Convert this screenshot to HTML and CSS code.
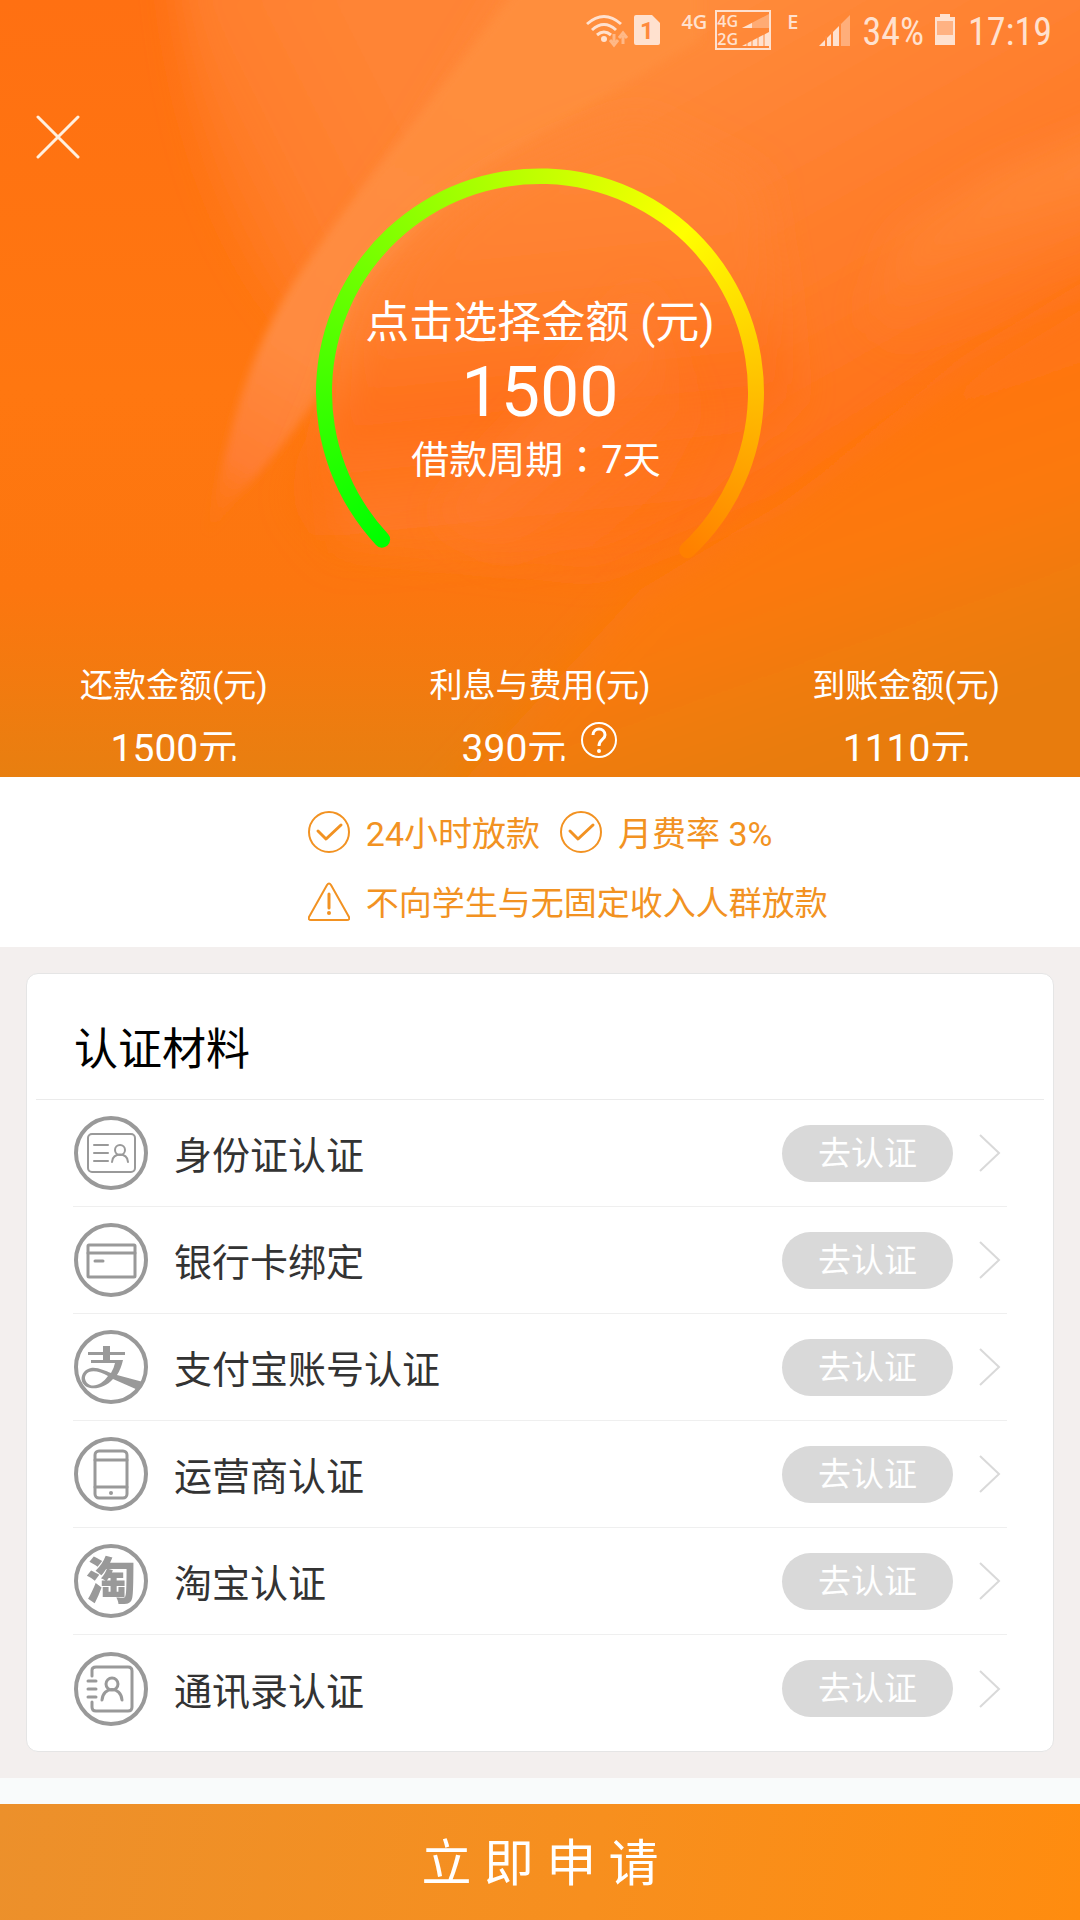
FILE: index.html
```html
<!DOCTYPE html>
<html lang="zh-CN">
<head>
<meta charset="utf-8">
<meta name="viewport" content="width=device-width, initial-scale=1">
<title>借款申请</title>
<link rel="stylesheet" href="styles.css">
</head>
<body>
<div class="page">
  <header class="hero">
    <svg class="hero-bg" viewBox="0 0 1080 777" preserveAspectRatio="none" aria-hidden="true">
      <defs>
        <linearGradient id="base" x1="0" y1="0" x2="0" y2="1">
          <stop offset="0" stop-color="#ff7012"/><stop offset=".5" stop-color="#ff7710"/><stop offset=".76" stop-color="#fc760f"/><stop offset="1" stop-color="#e87f10"/>
        </linearGradient>
        <linearGradient id="sheet" gradientUnits="userSpaceOnUse" x1="540" y1="40" x2="800" y2="500">
          <stop offset="0" stop-color="#ff8e3e"/><stop offset=".35" stop-color="#ff8333"/><stop offset=".7" stop-color="#ff7a27"/><stop offset="1" stop-color="#ff7014"/>
        </linearGradient>
        <linearGradient id="left" gradientUnits="userSpaceOnUse" x1="160" y1="230" x2="400" y2="110">
          <stop offset="0" stop-color="#ff7820" stop-opacity="0"/><stop offset=".5" stop-color="#ff7e2c"/><stop offset="1" stop-color="#ff8434"/>
        </linearGradient>
        <linearGradient id="band" gradientUnits="userSpaceOnUse" x1="480" y1="90" x2="215" y2="540">
          <stop offset="0" stop-color="#ff8e3e"/><stop offset=".6" stop-color="#ff8b40"/><stop offset=".85" stop-color="#ff7d30"/><stop offset="1" stop-color="#ff7616" stop-opacity="0"/>
        </linearGradient>
        <linearGradient id="inner" gradientUnits="userSpaceOnUse" x1="480" y1="170" x2="520" y2="560">
          <stop offset="0" stop-color="#ff8636"/><stop offset=".35" stop-color="#ff7e2c"/><stop offset=".6" stop-color="#ff701a"/><stop offset="1" stop-color="#ff7212" stop-opacity="0"/>
        </linearGradient>
        <linearGradient id="fold" gradientUnits="userSpaceOnUse" x1="510" y1="400" x2="640" y2="560">
          <stop offset="0" stop-color="#ff8038" stop-opacity=".8"/><stop offset="1" stop-color="#ff7015" stop-opacity="0"/>
        </linearGradient>
        <linearGradient id="wing" gradientUnits="userSpaceOnUse" x1="990" y1="170" x2="1040" y2="330">
          <stop offset="0" stop-color="#ff8b3c"/><stop offset="1" stop-color="#ff7a24" stop-opacity="0"/>
        </linearGradient>
        <linearGradient id="corner" gradientUnits="userSpaceOnUse" x1="860" y1="420" x2="960" y2="700">
          <stop offset="0" stop-color="#ff7512"/><stop offset=".4" stop-color="#fc790f"/><stop offset="1" stop-color="#e87c10"/>
        </linearGradient>
        <filter id="soft" x="-20%" y="-20%" width="140%" height="140%"><feGaussianBlur stdDeviation="18"/></filter>
        <filter id="edge" x="-10%" y="-10%" width="120%" height="120%"><feGaussianBlur stdDeviation="4"/></filter>
      </defs>
      <rect width="1080" height="777" fill="url(#base)"/>
      <path d="M175-40C185 130 220 250 300 330L560 200 540-40Z" fill="url(#left)" filter="url(#soft)"/>
      <path d="M540-50L1140-50V270L967 366 781 504 600 570 340 540 320 300 420 150Z" fill="url(#sheet)" filter="url(#soft)"/>
      <path d="M525-20Q470 50 413 124Q350 200 296 279Q250 350 227 448L200 550 234 500Q290 440 317 398L360 290 480 170 700 40V-20Z" fill="url(#band)" filter="url(#edge)"/>
      <path d="M640 120C480 170 400 240 360 330L336 400 290 500 330 570H640L800 400 760 180Z" fill="url(#inner)" filter="url(#soft)"/>
      <path d="M640 290L580 365 435 515 500 560 640 540 700 420Z" fill="url(#fold)" filter="url(#soft)"/>
      <path d="M1140 120L1000 175 900 235 860 320 920 380 1140 340Z" fill="url(#wing)" filter="url(#soft)"/>
      <path d="M1140 260L967 366 781 504 640 590 400 850H1140Z" fill="url(#corner)" filter="url(#soft)"/>
    </svg>

    <div class="status">
      <svg width="44" height="36" viewBox="0 0 44 36" fill="none" stroke="currentColor" stroke-width="3" aria-hidden="true">
        <path d="M2 12Q19-3 36 12M7 18Q19 7 31 18M12 23Q19 17 26 23"/><circle cx="19" cy="27" r="3" fill="currentColor" stroke="none"/>
        <path d="M29 22V30M25 28L29 33 33 28M38 32V24M34 26L38 21 42 26" opacity=".5"/>
      </svg>
      <svg class="sim" width="28" height="32" viewBox="0 0 28 32" aria-hidden="true">
        <path d="M2 1H19L27 9V29Q27 31 25 31H3Q1 31 1 29V3Q1 1 3 1Z" fill="currentColor"/>
        <text x="7" y="25" class="sim-text">1</text>
      </svg>
      <span class="net">4G</span>
      <span class="dual">
        <span class="dual-row">4G<svg width="28" height="16" viewBox="0 0 28 16" aria-hidden="true"><path d="M1 15L28 1V15Z" fill="currentColor" opacity=".4"/><path d="M1 15L11 10V15Z" fill="currentColor"/></svg></span>
        <span class="dual-row">2G<svg width="28" height="16" viewBox="0 0 28 16" aria-hidden="true"><path d="M1 15L28 1V15Z" fill="currentColor"/><path d="M6 11V15M11 8V15M17 5V15M23 2V15" stroke="#ff8a3d"/></svg></span>
      </span>
      <span class="net edge">E</span>
      <svg class="signal" width="32" height="32" viewBox="0 0 32 32" aria-hidden="true">
        <path d="M22 10L31 1V32H22Z" fill="currentColor" opacity=".45"/><path d="M0 32L20 12V32Z" fill="currentColor"/>
        <path d="M7 22V32M13 16V32M21 9V32" stroke="#ff8a3d" stroke-width="2"/>
      </svg>
      <span class="status-text">34%</span>
      <svg class="battery" width="22" height="32" viewBox="0 0 22 32" aria-hidden="true">
        <path d="M6 3V0H16V3H21V31H1V3Z" fill="currentColor"/><path d="M3 7H19V21H3Z" fill="#ffb283"/>
      </svg>
      <span class="status-text">17:19</span>
    </div>

    <nav class="nav">
      <button class="close" type="button" aria-label="关闭">
        <svg width="44" height="44" viewBox="0 0 44 44" fill="none" stroke="currentColor" stroke-width="3" stroke-linecap="round"><path d="M2 2L42 42M42 2L2 42"/></svg>
      </button>
    </nav>

    <button class="dial" type="button">
      <svg class="clip" width="0" height="0" aria-hidden="true"><clipPath id="arc"><path d="M60 377A224 224 0 1 1 377 388A8 8 0 0 1 366 376A208 208 0 1 0 72 366A8 8 0 0 1 60 377Z"/></clipPath></svg>
      <span class="ring"></span>
      <span class="dial-label">点击选择金额 (元)</span>
      <span class="dial-amount">1500</span>
      <span class="dial-term">借款周期<span class="colon" lang="zh-TW">：</span>7天</span>
    </button>

    <dl class="stats">
      <div class="stat"><dt>还款金额(元)</dt><dd><span class="value">1500元</span></dd></div>
      <div class="stat"><dt>利息与费用(元)</dt><dd><span class="value">390元</span>
        <button class="help" type="button" aria-label="费用说明"><svg width="38" height="38" viewBox="0 0 38 38" fill="none" stroke="currentColor" stroke-width="2"><circle cx="19" cy="19" r="17"/><path d="M13 14C13 6 25 6 25 14C25 19 19 18 19 25" stroke-width="3"/><circle cx="19" cy="30" r="2" fill="currentColor" stroke="none"/></svg></button></dd></div>
      <div class="stat"><dt>到账金额(元)</dt><dd><span class="value">1110元</span></dd></div>
    </dl>
  </header>

  <section class="notice">
    <div class="notice-row notice-main">
      <span class="tip"><svg width="42" height="42" viewBox="0 0 42 42"><circle cx="21" cy="21" r="20"/><path d="M10 20L18 28 33 14" stroke-width="3"/></svg><span>24小时放款</span></span>
      <span class="tip"><svg width="42" height="42" viewBox="0 0 42 42"><circle cx="21" cy="21" r="20"/><path d="M10 20L18 28 33 14" stroke-width="3"/></svg><span>月费率 3%</span></span>
    </div>
    <div class="notice-row">
      <span class="tip"><svg width="42" height="42" viewBox="0 0 42 42"><path d="M19 4Q21 1 23 4L41 36Q42 39 39 39H3Q0 39 1 36Z"/><path d="M21 13V27" stroke-width="3"/><circle cx="21" cy="32" r="2" class="dot"/></svg><span>不向学生与无固定收入人群放款</span></span>
    </div>
  </section>

  <main class="content">
    <section class="card">
      <h1 class="card-title">认证材料</h1>
      <ul class="list">
        <li class="item">
          <svg class="icon" viewBox="0 0 74 74"><circle class="rim" cx="37" cy="37" r="35"/><rect x="14" y="18" width="47" height="38" rx="4"/><path d="M20 29H34M20 37H34M20 45H34"/><circle cx="46" cy="34" r="5"/><path d="M38 46C38 36 54 36 54 46"/></svg>
          <span class="name">身份证认证</span><button class="pill" type="button">去认证</button>
          <svg class="chevron" viewBox="0 0 22 38"><path d="M1 1L20 19 1 37"/></svg>
        </li>
        <li class="item">
          <svg class="icon" viewBox="0 0 74 74"><circle class="rim" cx="37" cy="37" r="35"/><rect x="14" y="22" width="47" height="32" rx="1" class="heavy"/><path class="heavy" d="M14 30H61M21 38H29"/></svg>
          <span class="name">银行卡绑定</span><button class="pill" type="button">去认证</button>
          <svg class="chevron" viewBox="0 0 22 38"><path d="M1 1L20 19 1 37"/></svg>
        </li>
        <li class="item">
          <svg class="icon" viewBox="0 0 74 74"><circle class="rim" cx="37" cy="37" r="35"/><path class="solid" d="M29 16H36V22H51V25H36V30H49Q47 39 43 45L69 52 64 60 39 49C31 58 20 60 13 57C4 52 7 40 17 38C24 37 31 41 37 43Q40 38 41 33H17V30H29V25H14V22H29ZM34 46C27 42 20 40 15 42C9 45 10 52 16 55C22 57 29 53 34 46Z"/></svg>
          <span class="name">支付宝账号认证</span><button class="pill" type="button">去认证</button>
          <svg class="chevron" viewBox="0 0 22 38"><path d="M1 1L20 19 1 37"/></svg>
        </li>
        <li class="item">
          <svg class="icon" viewBox="0 0 74 74"><circle class="rim" cx="37" cy="37" r="35"/><rect class="book" x="21" y="14" width="32" height="47" rx="4"/><path class="book" d="M21 23H53M21 50H53"/><circle class="solid" cx="37" cy="56" r="2"/></svg>
          <span class="name">运营商认证</span><button class="pill" type="button">去认证</button>
          <svg class="chevron" viewBox="0 0 22 38"><path d="M1 1L20 19 1 37"/></svg>
        </li>
        <li class="item">
          <svg class="icon" viewBox="0 0 74 74"><circle class="rim" cx="37" cy="37" r="35"/><text class="tao" x="37" y="55" text-anchor="middle">淘</text></svg>
          <span class="name">淘宝认证</span><button class="pill" type="button">去认证</button>
          <svg class="chevron" viewBox="0 0 22 38"><path d="M1 1L20 19 1 37"/></svg>
        </li>
        <li class="item">
          <svg class="icon" viewBox="0 0 74 74"><circle class="rim" cx="37" cy="37" r="35"/><path class="book" d="M18 24V18Q18 15 22 15H54Q58 15 58 19V55Q58 59 54 59H22Q18 59 18 55V50M14 29H22M14 37H22M14 45H22"/><circle class="book" cx="38" cy="32" r="6"/><path class="book" d="M28 48C29 34 47 34 48 48"/></svg>
          <span class="name">通讯录认证</span><button class="pill" type="button">去认证</button>
          <svg class="chevron" viewBox="0 0 22 38"><path d="M1 1L20 19 1 37"/></svg>
        </li>
      </ul>
    </section>
  </main>

  <footer class="footer"><button class="apply" type="button">立 即 申 请</button></footer>
</div>
</body>
</html>
```
FILE: styles.css
```css
* { box-sizing: border-box; }

body {
  margin: 0;
  background: #f9fbfb;
  color: #333;
  font-family: Roboto, "Noto Sans CJK SC", sans-serif;
}

button {
  padding: 0;
  border: 0;
  background: none;
  color: inherit;
  font: inherit;
}

svg { display: block; flex: none; }

.page { min-height: 100vh; display: flex; flex-direction: column; }

/* Orange header */
.hero { position: relative; color: #fff; padding-bottom: 16px; isolation: isolate; }
.hero-bg { position: absolute; inset: 0; width: 100%; height: 100%; z-index: -1; }

.status {
  display: flex;
  align-items: center;
  justify-content: flex-end;
  height: 60px;
  padding-right: 28px;
  color: #ffe1cf;
}
.sim { margin-left: 4px; }
.sim-text { font: 700 24px Roboto, sans-serif; fill: #ff8a3d; }
.net { margin-left: 20px; font: 600 20px/28px "Open Sans", sans-serif; align-self: flex-start; padding-top: 8px; }
.edge { margin-left: 16px; }
.dual { margin-left: 8px; width: 56px; border: 2px solid currentColor; font: 600 16px/18px "Open Sans", sans-serif; }
.dual-row { display: flex; align-items: center; justify-content: space-between; height: 18px; }
.signal { margin-left: 20px; }
.status-text { margin-left: 12px; padding-top: 4px; font-family: "Roboto Condensed", Roboto, sans-serif; font-size: 38px; line-height: 40px; }
.battery { margin-left: 10px; }

.nav { padding: 55px 36px 0; }
.close { display: block; color: #fff0e0; }

.dial {
  position: relative;
  display: flex;
  flex-direction: column;
  align-items: center;
  width: 448px;
  height: 448px;
  margin: 9px auto 0;
  padding-top: 125px;
}
.clip { position: absolute; }
.ring {
  position: absolute;
  inset: 0;
  background: conic-gradient(from 227deg, #0f0 0deg, #ff0 175deg, #ff8000 270deg, #ff8000 310deg, #0f0 310deg);
  clip-path: url(#arc);
}
.dial-label { font-size: 44px; line-height: 60px; }
.dial-amount { font-size: 70px; line-height: 78px; }
.dial-term { font-size: 38px; line-height: 52px; margin-right: 8px; }
.colon { font-family: "Noto Sans CJK TC", sans-serif; }

.stats { display: flex; justify-content: space-between; margin: 45px 0 0; padding: 0 80px; }
.stat { display: flex; flex-direction: column; align-items: center; }
.stat dt { font-size: 33px; line-height: 50px; }
.stat dd { display: flex; margin: 10px 0 0; height: 40px; }
.value { font-size: 39px; line-height: 56px; overflow: hidden; }
.help { align-self: flex-start; margin-left: 14px; }

/* Notice lines */
.notice {
  display: flex;
  flex-direction: column;
  gap: 10px;
  padding: 25px 0 15px 28.5%;
  background: #fff;
  color: #f29222;
  font-size: 33px;
  line-height: 56px;
}
.notice-row { display: flex; gap: 20px; }
.notice-main { font-size: 34px; }
.tip { display: flex; align-items: center; gap: 16px; white-space: nowrap; }
.tip span { padding-top: 4px; }
.tip svg { fill: none; stroke: currentColor; stroke-width: 2; stroke-linecap: round; stroke-linejoin: round; }
.tip .dot { fill: currentColor; stroke: none; }

/* Verification card */
.content { padding: 26px; background: #f3efee; }
.card { padding: 0 9px 9px; border: 1px solid #e5e5e5; border-radius: 12px; background: #fff; }
.card-title {
  margin: 0;
  padding: 45px 38px 18px;
  border-bottom: 1px solid #ebebeb;
  color: #000;
  font-size: 44px;
  font-weight: 400;
  line-height: 62px;
}
.list { margin: 0; padding: 0 37px; list-style: none; }
.item { display: flex; align-items: center; height: 107px; padding-right: 6px; border-bottom: 1px solid #efefef; }
.item:last-child { border-bottom: 0; }
.icon { width: 74px; height: 74px; margin-left: 1px; fill: none; stroke: #999; stroke-width: 2; stroke-linecap: round; }
.icon .rim { stroke-width: 4; }
.icon .heavy, .icon .book { stroke-width: 3; }
.icon .solid { fill: #999; stroke: none; }
.icon .tao { fill: #999; stroke: none; font: 900 50px "Noto Sans CJK SC", sans-serif; }
.name { flex: 1; padding: 6px 0 0 26px; font-size: 38px; line-height: 56px; }
.pill { width: 171px; height: 57px; border-radius: 29px; background: #d9d9d9; color: #fff; font-size: 33px; line-height: 57px; }
.chevron { width: 22px; height: 38px; margin-left: 26px; fill: none; stroke: #d9d9d9; stroke-width: 2; }

/* Bottom action */
.footer { margin-top: auto; padding-top: 26px; }
.apply {
  display: block;
  width: 100%;
  height: 116px;
  padding-bottom: 6px;
  background: linear-gradient(100deg, #ec902b, #f78f1e 55%, #ff8c0f);
  color: #fff;
  font-size: 50px;
}
```
